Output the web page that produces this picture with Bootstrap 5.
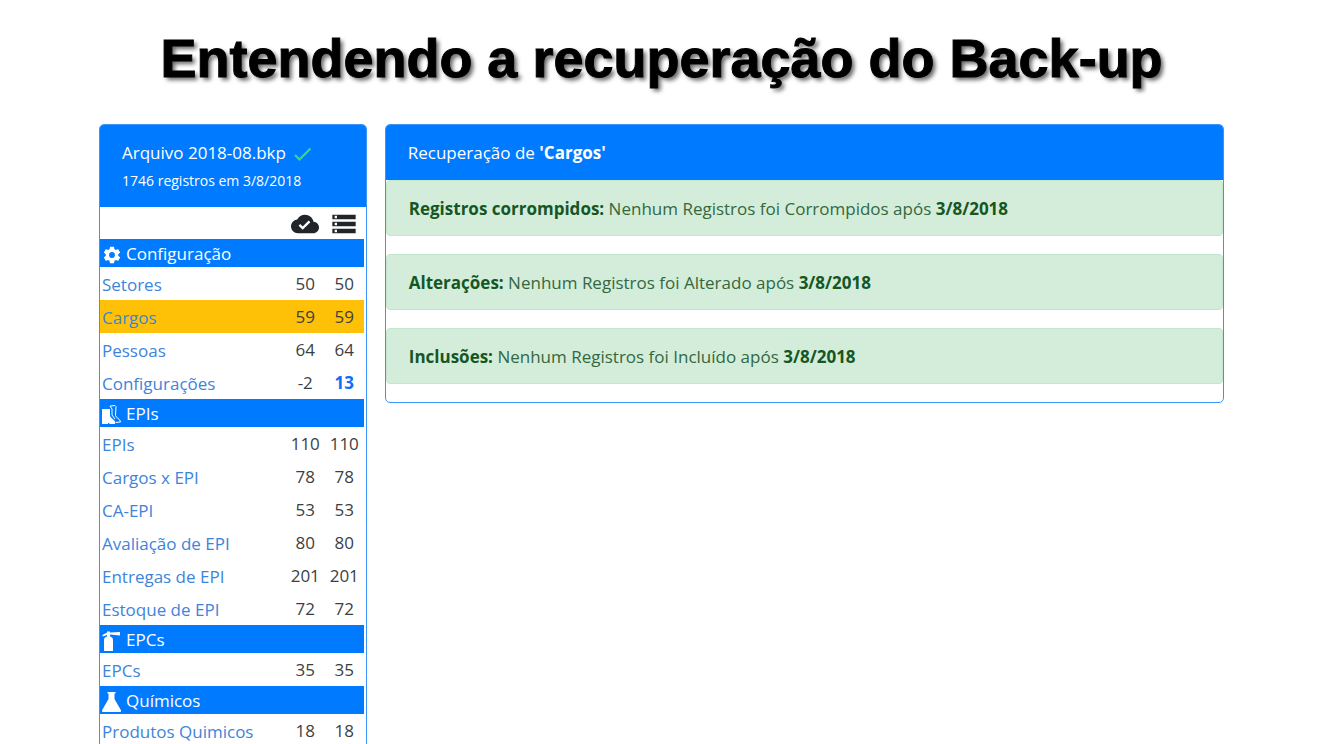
<!DOCTYPE html>
<html lang="pt-BR">
<head>
<meta charset="utf-8">
<meta name="viewport" content="width=device-width, initial-scale=1">
<title>Entendendo a recuperação do Back-up</title>
<link href="https://cdn.jsdelivr.net/npm/bootstrap@5.3.0/dist/css/bootstrap.min.css" rel="stylesheet">
<style>
  :root { --azul: #007bff; }
  body { font-family: "Open Sans", "Noto Sans", sans-serif; font-size: 17px; line-height: 24px; color: #212529; background: #fff; }
  .page-title { font-family: "Arial Rounded MT Bold", "Liberation Sans", sans-serif; font-weight: 700; font-size: 54px; line-height: 68px; color: #000; -webkit-text-stroke: 1px #000; text-shadow: 3px 3px 4px rgba(0,0,0,.6); padding: 24px 0 32px; }
  .page-wrap { max-width: 1143px; padding: 0 9px; }
  .page-wrap > .row { --bs-gutter-x: 18px; }
  .panel { border: 1px solid #3d94f8; border-radius: 5px; overflow: hidden; }
  .panel-head { background: var(--azul); color: #fff; padding: 16px 22px 15px; }
  .file-info { font-size: 14px; line-height: 20px; padding: 6px 0 1px; }
  .check { margin-left: 4px; }
  .table-wrap { padding-right: 2px; }
  .records { table-layout: fixed; border-collapse: collapse; }
  .records th, .records td { padding: 0; font-weight: 400; height: 33px; text-align: center; vertical-align: middle; }
  .records th:first-child { text-align: left; padding: 2px 0 0 2px; }
  .records td { color: #3b3f43; }
  .records thead th { height: 32px; color: #212529; line-height: 1; padding-top: 2px; }
  .records a { color: #3d84dc; text-decoration: none; }
  .records .section th { height: 28px; background: var(--azul); color: #fff; }
  .records .section svg { width: 20px; height: 20px; margin-right: 4px; }
  .records .current > * { background: #ffc107; }
  .records .changed { color: #0d6efd; font-weight: 700; }
  .c-num { width: 39px; }
  .notice { background: #d4edda; border: 1px solid #c3e6cb; color: #33683f; border-radius: 4px; padding: 16px 22px 14px; margin-bottom: 18px; }
  .notice b { color: #155724; }
</style>
</head>
<body class="vh-100 overflow-hidden">
<h1 class="page-title text-center text-nowrap m-0">Entendendo a recuperação do Back-up</h1>
<main class="container-fluid page-wrap">
  <div class="row">
    <aside class="col-3">
      <div class="card panel">
        <div class="panel-head">
          <div class="text-nowrap">Arquivo 2018-08.bkp
            <svg class="check" width="18" height="14" viewBox="0 0 18 14" fill="none" stroke="#3be06b" stroke-width="2" aria-hidden="true"><path d="M1 8l4.500 4.500L16.500 1.500"/></svg>
          </div>
          <div class="file-info">1746 registros em 3/8/2018</div>
        </div>
        <div class="table-wrap">
        <table class="records w-100">
          <colgroup><col><col class="c-num"><col class="c-num"></colgroup>
          <thead>
            <tr>
              <th></th>
              <th scope="col"><svg role="img" aria-label="Back-up" width="28" height="28" viewBox="0 0 24 24" fill="currentColor"><path d="M19.350 10.040C18.670 6.590 15.640 4 12 4 9.110 4 6.600 5.640 5.350 8.040 2.340 8.360 0 10.910 0 14c0 3.310 2.690 6 6 6h13c2.760 0 5-2.240 5-5 0-2.640-2.050-4.780-4.650-4.960zM10 17l-3.500-3.500 1.410-1.410L10 14.170 15.180 9l1.410 1.410L10 17z"/></svg></th>
              <th scope="col"><svg role="img" aria-label="Servidor" width="28" height="28" viewBox="0 0 24 24" fill="currentColor"><path d="M2 20h20v-4H2v4zm2-3h2v2H4v-2zM2 4v4h20V4H2zm4 3H4V5h2v2zm-4 7h20v-4H2v4zm2-3h2v2H4v-2z"/></svg></th>
            </tr>
          </thead>
          <tbody>
            <tr class="section"><th colspan="3"><svg viewBox="0 0 24 24" fill="currentColor" aria-hidden="true"><path d="M19.430 12.980c.04-.32.070-.64.070-.98s-.03-.66-.07-.98l2.110-1.650c.19-.15.240-.42.120-.64l-2-3.460c-.12-.22-.39-.3-.61-.22l-2.490 1c-.52-.4-1.080-.73-1.690-.98l-.38-2.650C14.460 2.180 14.250 2 14 2h-4c-.25 0-.46.180-.49.420l-.38 2.650c-.61.250-1.170.590-1.690.980l-2.490-1c-.23-.09-.49 0-.61.220l-2 3.460c-.13.220-.07.490.120.640l2.110 1.650c-.04.320-.07.650-.07.980s.03.660.070.980l-2.110 1.650c-.19.150-.24.420-.12.640l2 3.460c.12.220.39.300.61.220l2.490-1c.52.400 1.080.730 1.690.980l.38 2.650c.03.240.240.420.490.420h4c.25 0 .46-.18.490-.42l.38-2.650c.61-.25 1.170-.59 1.690-.98l2.490 1c.23.090.490 0 .61-.22l2-3.460c.12-.22.070-.49-.12-.64l-2.110-1.650zM12 15.500a3.500 3.500 0 1 1 0-7 3.500 3.500 0 0 1 0 7z"/></svg>Configuração</th></tr>
            <tr><th scope="row"><a href="#">Setores</a></th><td>50</td><td>50</td></tr>
            <tr class="current"><th scope="row"><a href="#">Cargos</a></th><td>59</td><td>59</td></tr>
            <tr><th scope="row"><a href="#">Pessoas</a></th><td>64</td><td>64</td></tr>
            <tr><th scope="row"><a href="#">Configurações</a></th><td>-2</td><td class="changed">13</td></tr>
            <tr class="section"><th colspan="3"><svg viewBox="0 0 20 20" fill="#fff" aria-hidden="true"><path d="M0 4h8v6.500c0 2 4 4 5 6V19H8l-2-1.500V19H0z"/><path d="M8 1l5-.5 1 1-.5 9c0 2 5 3.500 5 6.500l-5 .5M8 1l2 3v6l3 4" fill="none" stroke="#fff" stroke-width="1"/></svg>EPIs</th></tr>
            <tr><th scope="row"><a href="#">EPIs</a></th><td>110</td><td>110</td></tr>
            <tr><th scope="row"><a href="#">Cargos x EPI</a></th><td>78</td><td>78</td></tr>
            <tr><th scope="row"><a href="#">CA-EPI</a></th><td>53</td><td>53</td></tr>
            <tr><th scope="row"><a href="#">Avaliação de EPI</a></th><td>80</td><td>80</td></tr>
            <tr><th scope="row"><a href="#">Entregas de EPI</a></th><td>201</td><td>201</td></tr>
            <tr><th scope="row"><a href="#">Estoque de EPI</a></th><td>72</td><td>72</td></tr>
            <tr class="section"><th colspan="3"><svg viewBox="0 0 20 20" fill="#fff" aria-hidden="true"><path d="M2 20V9c0-2 1-3 3-3.500V4L.5 5.500V4L5 1.500V.5h3v1l10-.5v3.500L8 3.500v2c2 .5 3 1.500 3 3.500v11z"/></svg>EPCs</th></tr>
            <tr><th scope="row"><a href="#">EPCs</a></th><td>35</td><td>35</td></tr>
            <tr class="section"><th colspan="3"><svg viewBox="0 0 20 20" fill="#fff" aria-hidden="true"><path d="M5.500 0h8v1.500h-1V7l6.300 11c.5 1 .2 2-1 2H1.200c-1.200 0-1.500-1-1-2L6.500 7V1.500h-1z"/></svg>Químicos</th></tr>
            <tr><th scope="row"><a href="#">Produtos Quimicos</a></th><td>18</td><td>18</td></tr>
          </tbody>
        </table>
        </div>
      </div>
    </aside>
    <section class="col-9">
      <div class="card panel">
        <div class="panel-head">Recuperação de <b>'Cargos'</b></div>
        <div class="notice"><b>Registros corrompidos:</b> Nenhum Registros foi Corrompidos após <b>3/8/2018</b></div>
        <div class="notice"><b>Alterações:</b> Nenhum Registros foi Alterado após <b>3/8/2018</b></div>
        <div class="notice"><b>Inclusões:</b> Nenhum Registros foi Incluído após <b>3/8/2018</b></div>
      </div>
    </section>
  </div>
</main>
<script src="https://cdn.jsdelivr.net/npm/bootstrap@5.3.0/dist/js/bootstrap.bundle.min.js"></script>
</body>
</html>
